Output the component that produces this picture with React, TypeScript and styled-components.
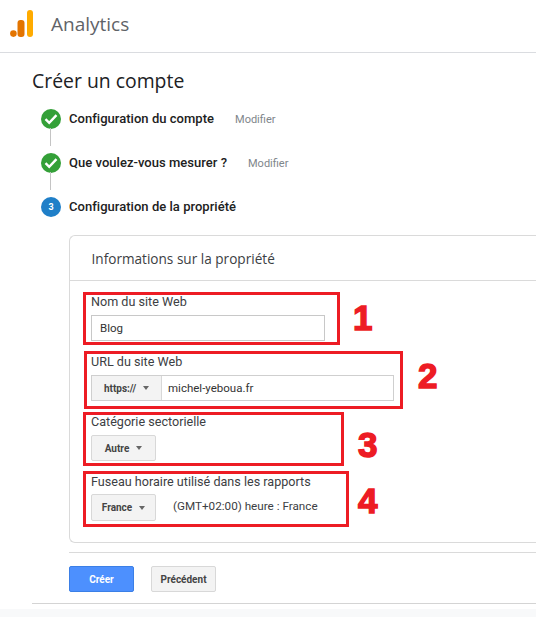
import React from "react";
import styled, { createGlobalStyle } from "styled-components";

const Global = createGlobalStyle`
  html, body { margin: 0; padding: 0; background: #fff; }
  body { font-family: Roboto, "Liberation Sans", sans-serif; overflow: hidden; }
`;

const Page = styled.div`
  width: 536px;
  height: 617px;
  overflow: hidden;
  display: flex;
  flex-direction: column;
  background: #fff;
`;

const Header = styled.header`
  height: 53px;
  flex: none;
  display: flex;
  align-items: center;
  gap: 17px;
  padding: 0 0 4px 10px;
  box-sizing: border-box;
  border-bottom: 1px solid #dadce0;
`;

const Brand = styled.span`
  font-family: "Open Sans", Roboto, sans-serif;
  font-size: 19px;
  color: #5f6368;
`;

const Main = styled.main`
  flex: none;
  height: 551px;
  box-sizing: border-box;
  margin-left: 32px;
  padding-top: 14px;
  border-bottom: 1px solid #d4d4d4;
`;

const Title = styled.h1`
  margin: 0;
  height: 27px;
  font-family: "Open Sans", Roboto, sans-serif;
  font-size: 19.4px;
  line-height: 27px;
  font-weight: 400;
  color: #202124;
`;

const Steps = styled.ol`
  list-style: none;
  margin: 15px 0 0 9px;
  padding: 0;
`;

const Step = styled.li<{ $gap: number }>`
  position: relative;
  height: 20px;
  margin-bottom: ${(p) => p.$gap}px;
  display: flex;
  align-items: center;
`;

const Connector = styled.span`
  position: absolute;
  left: 9px;
  top: 19px;
  width: 1px;
  height: 18px;
  background: #c4c4c4;
`;

const Circle = styled.span<{ $color: string }>`
  width: 20px;
  height: 20px;
  flex: none;
  border-radius: 50%;
  background: ${(p) => p.$color};
  display: flex;
  align-items: center;
  justify-content: center;
  color: #fff;
  font-size: 9px;
  font-weight: 700;
`;

const StepName = styled.span`
  margin-left: 8px;
  padding-bottom: 2px;
  font-size: 13px;
  font-weight: 500;
  color: #212121;
  letter-spacing: 0.03px;
`;

const Modify = styled.span`
  margin-left: 21px;
  font-size: 11px;
  color: #80868b;
`;

const Card = styled.section`
  margin: 18px -1px 0 37px;
  height: 308px;
  box-sizing: border-box;
  border: 1px solid #dadada;
  border-right: 0;
  border-radius: 6px 0 0 6px;
`;

const CardTitle = styled.div`
  height: 45px;
  box-sizing: border-box;
  padding: 0 0 0 21.5px;
  display: flex;
  align-items: center;
  border-bottom: 1px solid #dadada;
  font-family: "Open Sans", Roboto, sans-serif;
  font-size: 13.6px;
  color: #3c4043;
`;

const Fields = styled.div`
  padding: 14px 0 0 21px;
`;

const Field = styled.div`
  position: relative;
  height: 60px;
`;

const Label = styled.div`
  height: 14px;
  font-size: 12.6px;
  line-height: 14px;
  color: #3c4043;
  margin-bottom: 6px;
`;

const TextBox = styled.div`
  width: 234px;
  height: 26px;
  box-sizing: border-box;
  border: 1px solid #c8c8c8;
  display: flex;
  align-items: center;
  padding-left: 8px;
  font-size: 11.5px;
  color: #333;
`;

const InputGroup = styled.div`
  width: 303px;
  height: 26px;
  box-sizing: border-box;
  border: 1px solid #cfcfcf;
  display: flex;
`;

const Prefix = styled.div`
  width: 70px;
  flex: none;
  box-sizing: border-box;
  background: #f3f3f3;
  border-right: 1px solid #d8d8d8;
  display: flex;
  align-items: center;
  justify-content: center;
  gap: 7px;
  font-size: 10px;
  font-weight: 700;
  color: #444;
`;

const UrlValue = styled.div`
  flex: 1;
  padding-left: 6px;
  display: flex;
  align-items: center;
  font-size: 11.5px;
  color: #333;
`;

const Caret = styled.span`
  width: 0;
  height: 0;
  border-left: 3.5px solid transparent;
  border-right: 3.5px solid transparent;
  border-top: 4px solid #666;
`;

const SelectRow = styled.div`
  display: flex;
  align-items: center;
  margin-top: -1px;
`;

const SelectButton = styled.div<{ $tall?: boolean }>`
  width: 65px;
  height: ${(p) => (p.$tall ? 27 : 26)}px;
  box-sizing: border-box;
  border: 1px solid #d8d8d8;
  border-radius: 2px;
  background: #f3f3f3;
  display: flex;
  align-items: center;
  justify-content: center;
  gap: 7px;
  font-size: 10px;
  font-weight: 700;
  color: #444;
`;

const Zone = styled.span`
  margin-left: 17px;
  padding-bottom: 3px;
  font-size: 11.7px;
  color: #3c4043;
`;

const Annotation = styled.div<{ $l: number; $t: number; $w: number; $h: number }>`
  position: absolute;
  left: ${(p) => p.$l}px;
  top: ${(p) => p.$t}px;
  width: ${(p) => p.$w}px;
  height: ${(p) => p.$h}px;
  box-sizing: border-box;
  border: 3px solid #ed1c24;
  pointer-events: none;
`;

const Mark = styled.span<{ $l: number; $t: number }>`
  position: absolute;
  left: ${(p) => p.$l}px;
  top: ${(p) => p.$t}px;
  font-family: "Liberation Sans", Arial, sans-serif;
  font-size: 35px;
  line-height: 36px;
  font-weight: 700;
  color: #ed1c24;
  -webkit-text-stroke: 1.5px #ed1c24;
`;

const Divider = styled.div`
  margin: 9px -1px 0 37px;
  height: 1px;
  background: #dadada;
`;

const Actions = styled.div`
  display: flex;
  gap: 17px;
  margin: 13px 0 0 37px;
`;

const ActionButton = styled.div<{ $primary?: boolean }>`
  width: 65px;
  height: 26px;
  box-sizing: border-box;
  border-radius: 2px;
  border: 1px solid ${(p) => (p.$primary ? "#3b7fe6" : "#d8d8d8")};
  background: ${(p) => (p.$primary ? "#4d90fe" : "#f3f3f3")};
  color: ${(p) => (p.$primary ? "#fff" : "#444")};
  display: flex;
  align-items: center;
  justify-content: center;
  font-size: 10px;
  font-weight: 700;
`;

const Footer = styled.div`
  flex: 1;
  margin-top: 5px;
  background: #f8f9fa;
`;

const Logo = () => (
  <svg width="24" height="28" viewBox="0 0 24 28">
    <rect x="17" y="0" width="6" height="27" rx="3" fill="#ffab00" />
    <rect x="7.5" y="10" width="7" height="17" rx="3" fill="#e37400" />
    <circle cx="3.4" cy="23.6" r="3.3" fill="#e37400" />
  </svg>
);

const Check = () => (
  <svg width="14" height="12" viewBox="0 0 14 12">
    <path d="M1.5 6.2 5.2 9.8 12.5 2.2" fill="none" stroke="#fff" strokeWidth="2.4" />
  </svg>
);

export default function App() {
  return (
    <Page>
      <Global />
      <Header>
        <Logo />
        <Brand>Analytics</Brand>
      </Header>
      <Main>
        <Title>Créer un compte</Title>
        <Steps>
          <Step $gap={24}>
            <Circle $color="#34a038"><Check /></Circle>
            <Connector />
            <StepName>Configuration du compte</StepName>
            <Modify>Modifier</Modify>
          </Step>
          <Step $gap={24}>
            <Circle $color="#34a038"><Check /></Circle>
            <Connector />
            <StepName>Que voulez-vous mesurer ?</StepName>
            <Modify>Modifier</Modify>
          </Step>
          <Step $gap={0}>
            <Circle $color="#1f7fc8">3</Circle>
            <StepName>Configuration de la propriété</StepName>
          </Step>
        </Steps>
        <Card>
          <CardTitle>Informations sur la propriété</CardTitle>
          <Fields>
            <Field>
              <Label>Nom du site Web</Label>
              <TextBox>Blog</TextBox>
              <Annotation $l={-8} $t={-3} $w={257} $h={53} />
              <Mark $l={262} $t={5}>1</Mark>
            </Field>
            <Field>
              <Label>URL du site Web</Label>
              <InputGroup>
                <Prefix>https:// <Caret /></Prefix>
                <UrlValue>michel-yeboua.fr</UrlValue>
              </InputGroup>
              <Annotation $l={-7} $t={-4} $w={319} $h={58} />
              <Mark $l={327} $t={3}>2</Mark>
            </Field>
            <Field>
              <Label>Catégorie sectorielle</Label>
              <SelectButton>Autre <Caret /></SelectButton>
              <Annotation $l={-8} $t={-3} $w={261} $h={54} />
              <Mark $l={267} $t={12}>3</Mark>
            </Field>
            <Field>
              <Label>Fuseau horaire utilisé dans les rapports</Label>
              <SelectRow>
                <SelectButton $tall>France <Caret /></SelectButton>
                <Zone>(GMT+02:00) heure : France</Zone>
              </SelectRow>
              <Annotation $l={-8} $t={-4} $w={266} $h={56} />
              <Mark $l={267} $t={8}>4</Mark>
            </Field>
          </Fields>
        </Card>
        <Divider />
        <Actions>
          <ActionButton $primary>Créer</ActionButton>
          <ActionButton>Précédent</ActionButton>
        </Actions>
      </Main>
      <Footer />
    </Page>
  );
}
